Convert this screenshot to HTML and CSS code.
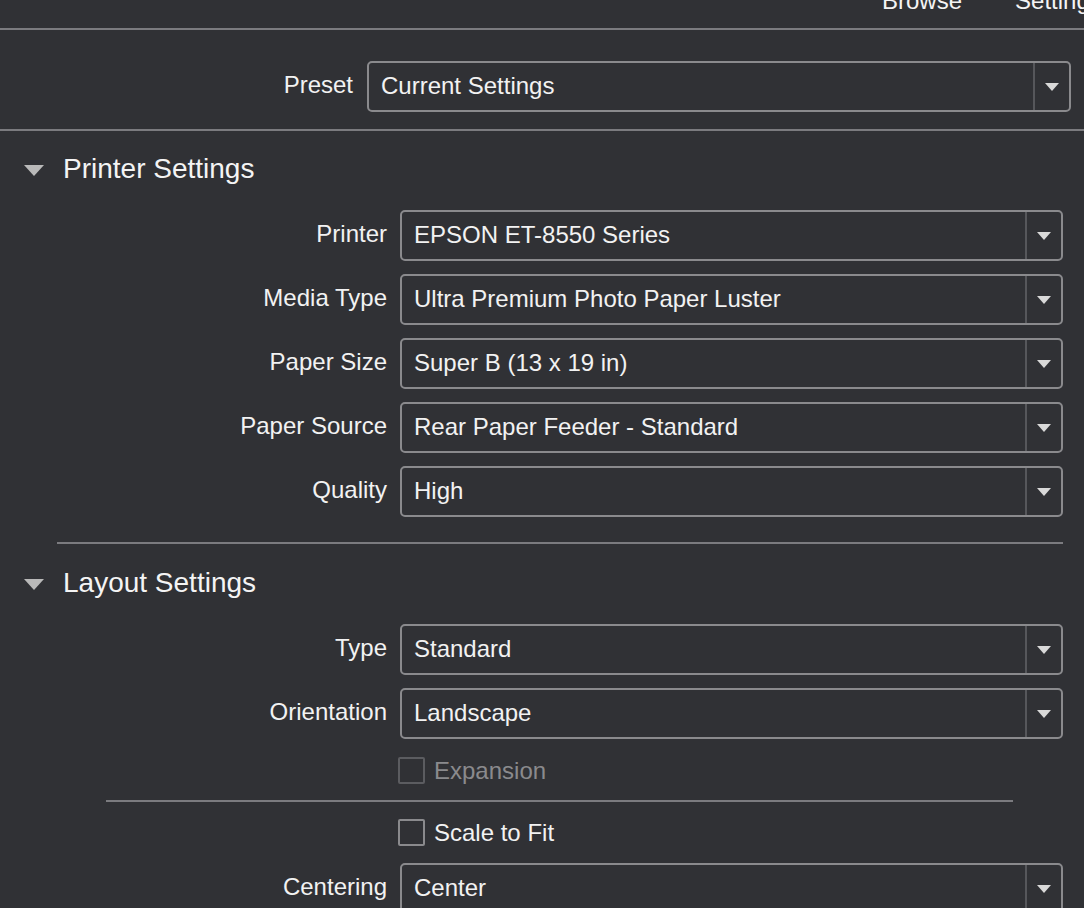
FILE: index.html
```html
<!DOCTYPE html>
<html>
<head>
<meta charset="utf-8">
<link rel="stylesheet" href="styles.css">
</head>
<body>
<div class="topbar">
  <span class="tab tab-browse">Browse</span>
  <span class="tab tab-settings">Settings</span>
</div>

<div class="preset-area">
  <div class="row preset-row">
    <div class="label">Preset</div>
    <div class="select"><span class="value">Current Settings</span><span class="arrow"><i></i></span></div>
  </div>
</div>

<div class="section">
  <div class="heading"><span class="disclosure"></span><span class="title">Printer Settings</span></div>
  <div class="rows">
    <div class="row"><div class="label">Printer</div><div class="select"><span class="value">EPSON ET-8550 Series</span><span class="arrow"><i></i></span></div></div>
    <div class="row"><div class="label">Media Type</div><div class="select"><span class="value">Ultra Premium Photo Paper Luster</span><span class="arrow"><i></i></span></div></div>
    <div class="row"><div class="label">Paper Size</div><div class="select"><span class="value">Super B (13 x 19 in)</span><span class="arrow"><i></i></span></div></div>
    <div class="row"><div class="label">Paper Source</div><div class="select"><span class="value">Rear Paper Feeder - Standard</span><span class="arrow"><i></i></span></div></div>
    <div class="row"><div class="label">Quality</div><div class="select"><span class="value">High</span><span class="arrow"><i></i></span></div></div>
  </div>
  <div class="section-divider"></div>
</div>

<div class="section">
  <div class="heading heading-layout"><span class="disclosure"></span><span class="title">Layout Settings</span></div>
  <div class="rows">
    <div class="row"><div class="label">Type</div><div class="select"><span class="value">Standard</span><span class="arrow"><i></i></span></div></div>
    <div class="row"><div class="label">Orientation</div><div class="select"><span class="value">Landscape</span><span class="arrow"><i></i></span></div></div>
  </div>
  <div class="check-row disabled"><span class="box"></span><span class="check-label">Expansion</span></div>
  <div class="inner-divider"></div>
  <div class="check-row"><span class="box"></span><span class="check-label">Scale to Fit</span></div>
  <div class="rows rows-last">
    <div class="row"><div class="label">Centering</div><div class="select"><span class="value">Center</span><span class="arrow"><i></i></span></div></div>
  </div>
</div>
</body>
</html>
```

FILE: styles.css
```css
html, body {
  margin: 0;
  padding: 0;
}
body {
  background: #303135;
  color: #f2f2f2;
  font-family: "Liberation Sans", Arial, Helvetica, sans-serif;
  font-size: 24px;
  width: 1084px;
  height: 908px;
  overflow: hidden;
}

.topbar {
  height: 28px;
  border-bottom: 2px solid #7b7b7f;
  position: relative;
  overflow: hidden;
  display: flex;
  padding-left: 882px;
  gap: 53px;
  white-space: nowrap;
}
.tab {
  line-height: 24px;
  margin-top: -11px;
  color: #f4f4f4;
}

.preset-area {
  padding-top: 31px;
  padding-bottom: 17px;
  border-bottom: 2px solid #7b7b7f;
}

.row {
  display: grid;
  grid-template-columns: 387px 663px;
  column-gap: 13px;
  align-items: center;
}
.preset-row {
  grid-template-columns: 353px 704px;
  column-gap: 14px;
}
.label {
  text-align: right;
  white-space: nowrap;
  margin-top: -4px;
}

.select {
  box-sizing: border-box;
  height: 51px;
  border: 2px solid #8a8a8d;
  border-radius: 5px;
  display: flex;
  align-items: stretch;
}
.select .value {
  flex: 1;
  padding-left: 12px;
  padding-bottom: 1px;
  display: flex;
  align-items: center;
  white-space: nowrap;
}
.select .arrow {
  width: 34px;
  border-left: 2px solid #56575b;
  display: flex;
  align-items: center;
  justify-content: center;
}
.select .arrow i {
  width: 0;
  height: 0;
  border-left: 7px solid transparent;
  border-right: 7px solid transparent;
  border-top: 8px solid #d9d9d9;
}

.section {
  padding-top: 18px;
}
.heading {
  height: 40px;
  display: flex;
  align-items: center;
  padding-left: 24px;
  font-size: 28px;
}
.disclosure {
  width: 0;
  height: 0;
  border-left: 10px solid transparent;
  border-right: 10px solid transparent;
  border-top: 11px solid #b9b9b9;
  margin-right: 19px;
  margin-top: 2px;
}
.title {
  color: #f4f4f4;
}

.rows {
  padding-top: 21px;
  display: flex;
  flex-direction: column;
  gap: 13px;
}
.section-divider {
  margin: 25px 21px 0 57px;
  height: 2px;
  background: #7b7b7f;
}
.heading-layout {
  margin-top: 1px;
}

.check-row {
  display: flex;
  align-items: center;
  margin-left: 398px;
  margin-top: 17px;
  gap: 9px;
}
.check-row .box {
  box-sizing: border-box;
  width: 27px;
  height: 27px;
  border: 2px solid #8a8a8d;
  border-radius: 2px;
}
.check-row .check-label {
  margin-top: 1px;
}
.check-row.disabled .box {
  border-color: #5b5c60;
}
.check-row.disabled .check-label {
  color: #8a8a8d;
}

.inner-divider {
  margin: 15px 0 0 106px;
  width: 907px;
  height: 2px;
  background: #7b7b7f;
}
.inner-divider + .check-row {
  margin-top: 16px;
}
.rows-last {
  padding-top: 16px;
}
```
